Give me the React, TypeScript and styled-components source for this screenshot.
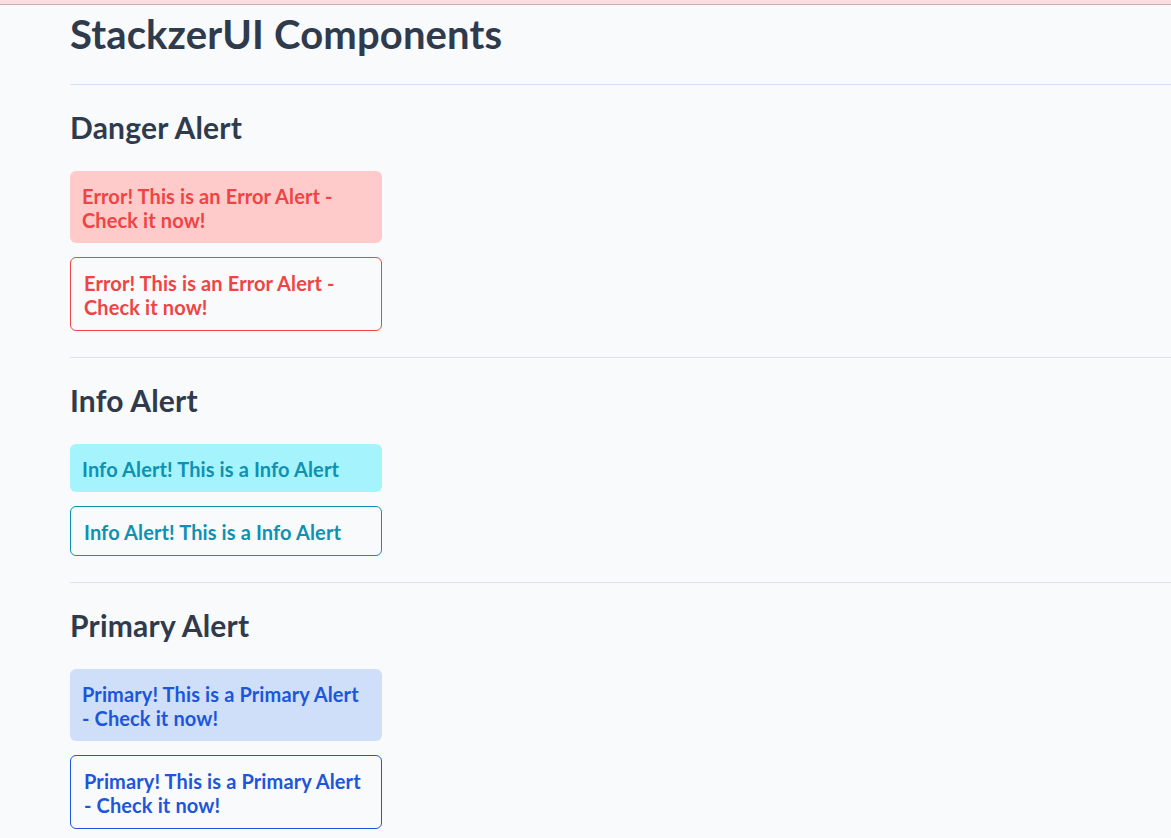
import React from "react";
import styled, { createGlobalStyle, css } from "styled-components";

const Global = createGlobalStyle`
  html, body { margin: 0; padding: 0; }
  body {
    background: #f8fafc;
    font-family: Lato, "Open Sans", sans-serif;
    color: #334155;
    overflow: hidden;
  }
`;

const TopStrip = styled.div`
  height: 4px;
  background: #fddde0;
  border-bottom: 1px solid #c9b0b3;
`;

const Main = styled.main`
  padding: 0 0 0 70px;
`;

const Title = styled.h1`
  margin: 5px 0 0;
  font-size: 40px;
  line-height: 48px;
  font-weight: 700;
  letter-spacing: 0.14px;
  color: #2f3b4c;
`;

const Rule = styled.hr<{ $tone: "blue" | "gray" }>`
  border: 0;
  height: 1px;
  margin: 0;
  background: ${(p) => (p.$tone === "blue" ? "#cfe1fb" : "#dfe3e8")};
`;

const TitleRule = styled(Rule)`
  margin-top: 26px;
`;

const Section = styled.section`
  padding: 24px 0 26px;
  display: flex;
  flex-direction: column;
  align-items: flex-start;
`;

const Heading = styled.h2`
  margin: 0 0 26px;
  font-size: 30px;
  line-height: 36px;
  font-weight: 700;
  letter-spacing: 0.2px;
  color: #2f3b4c;
`;

const Stack = styled.div`
  display: flex;
  flex-direction: column;
  gap: 14px;
`;

type Tone = "danger" | "info" | "primary";
const palette: Record<Tone, { fg: string; bg: string }> = {
  danger: { fg: "#ef4444", bg: "#fecaca" },
  info: { fg: "#0e91b2", bg: "#a5f3fc" },
  primary: { fg: "#1d56db", bg: "#cfdffa" },
};

const Alert = styled.div<{ $tone: Tone; $outline?: boolean }>`
  box-sizing: border-box;
  width: 312px;
  border-radius: 6px;
  font-size: 20px;
  line-height: 24px;
  font-weight: 700;
  letter-spacing: 0.12px;
  color: ${(p) => palette[p.$tone].fg};
  ${(p) =>
    p.$outline
      ? css`
          border: 1px solid ${palette[p.$tone].fg};
          padding: 13px 13px 11px;
          background: transparent;
        `
      : css`
          padding: 13px 12px 11px;
          background: ${palette[p.$tone].bg};
        `}
`;

const sections: { title: string; tone: Tone; text: string }[] = [
  { title: "Danger Alert", tone: "danger", text: "Error! This is an Error Alert - Check it now!" },
  { title: "Info Alert", tone: "info", text: "Info Alert! This is a Info Alert" },
  { title: "Primary Alert", tone: "primary", text: "Primary! This is a Primary Alert - Check it now!" },
];

export default function App() {
  return (
    <>
      <Global />
      <TopStrip />
      <Main>
        <Title>StackzerUI Components</Title>
        <TitleRule $tone="blue" />
        {sections.map((s, i) => (
          <React.Fragment key={s.title}>
            <Section>
              <Heading>{s.title}</Heading>
              <Stack>
                <Alert $tone={s.tone}>{s.text}</Alert>
                <Alert $tone={s.tone} $outline>
                  {s.text}
                </Alert>
              </Stack>
            </Section>
            {i < sections.length - 1 && <Rule $tone="gray" />}
          </React.Fragment>
        ))}
      </Main>
    </>
  );
}
